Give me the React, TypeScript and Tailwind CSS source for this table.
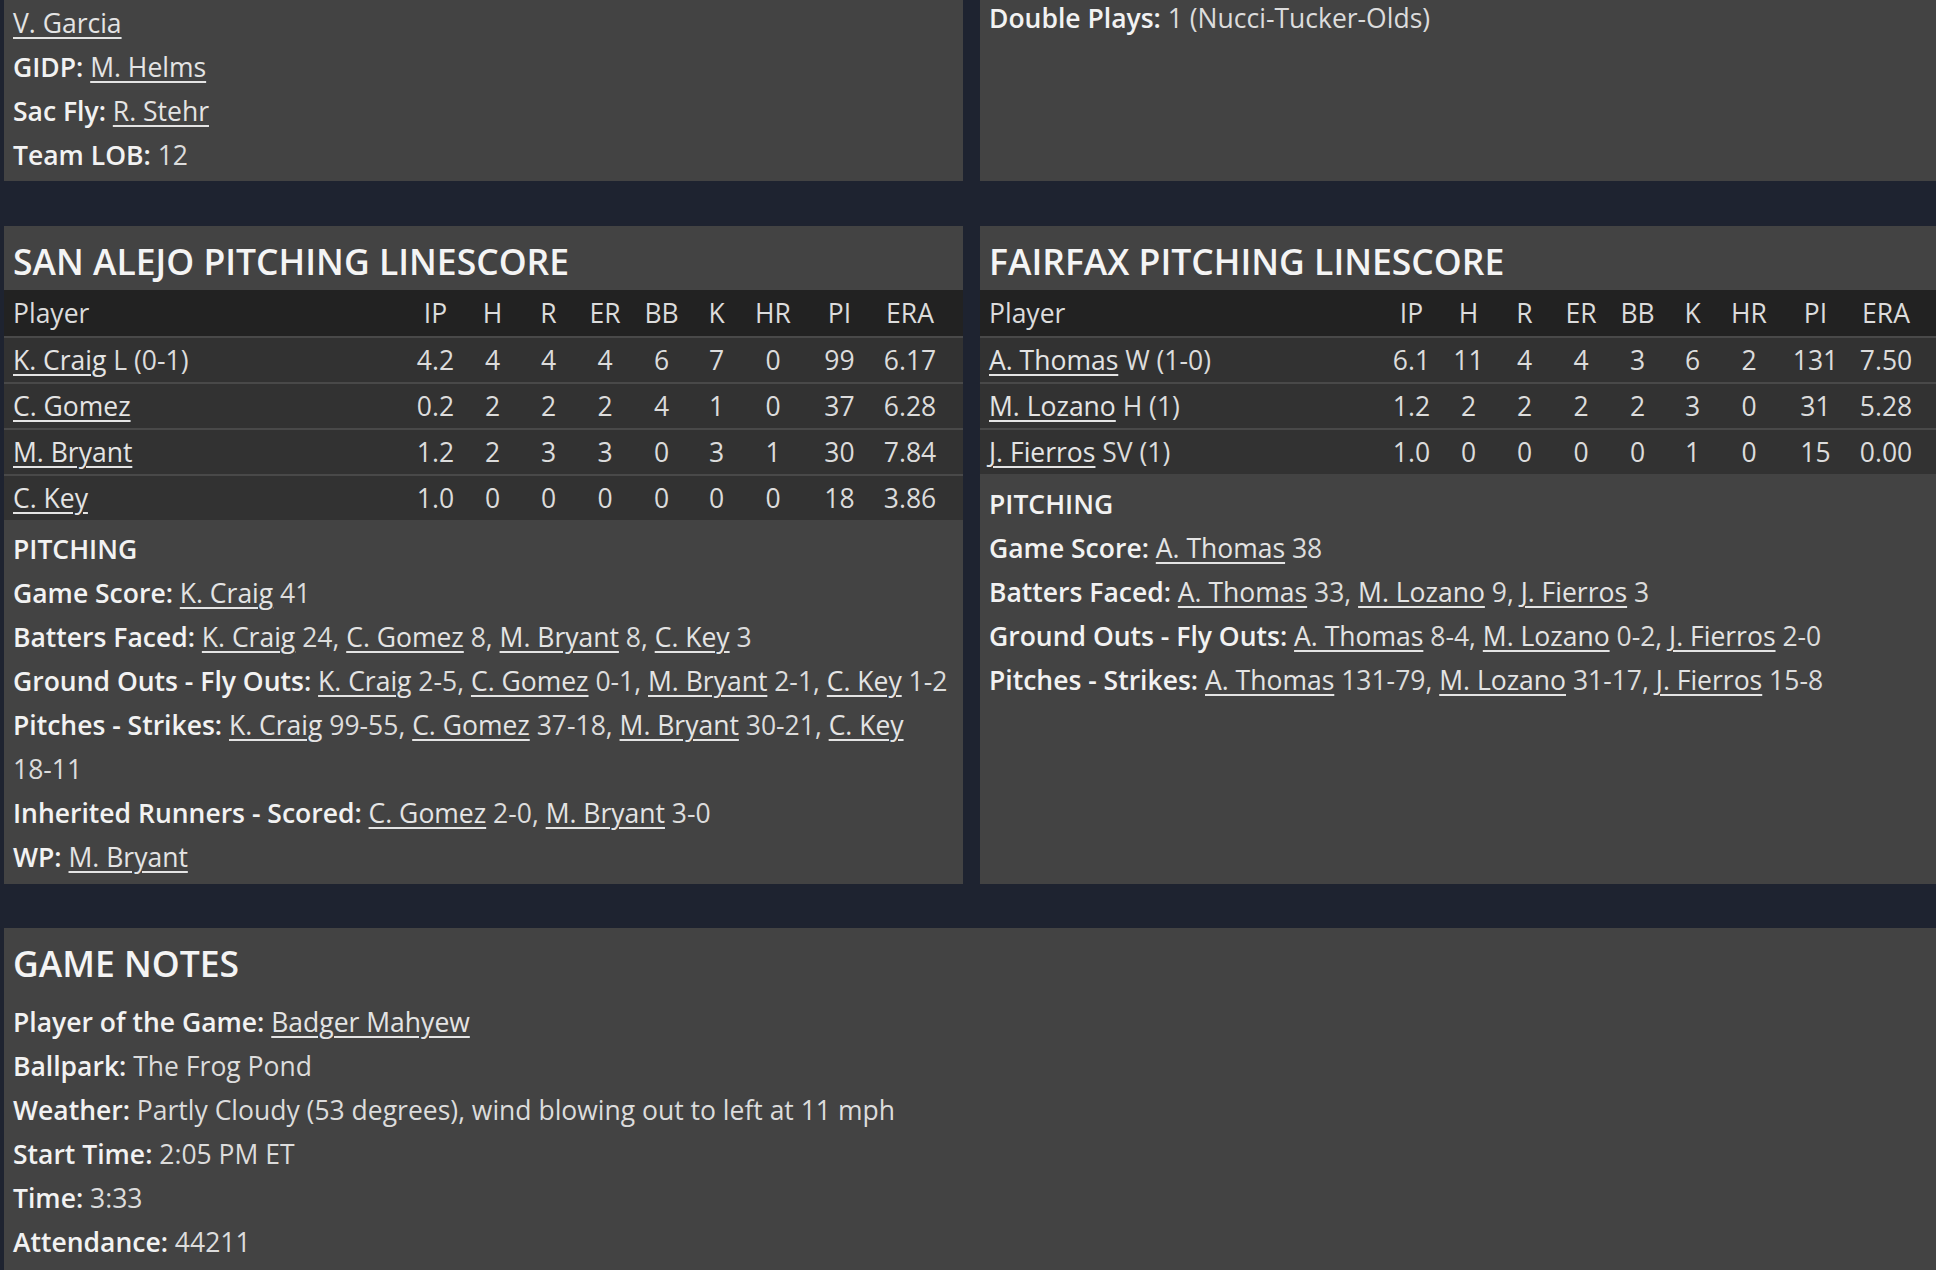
import React from "react";

function N({ children }: { children: React.ReactNode }) {
  return (
    <span className="underline decoration-[1.5px] underline-offset-[4px] text-[#e4e4e4]">
      {children}
    </span>
  );
}

function L({ children }: { children: React.ReactNode }) {
  return <span className="font-semibold text-[#f2f2f2]">{children}</span>;
}

type Row = { name: string; dec: string; v: string[] };

const sanAlejo: Row[] = [
  { name: "K. Craig", dec: " L (0-1)", v: ["4.2", "4", "4", "4", "6", "7", "0", "99", "6.17"] },
  { name: "C. Gomez", dec: "", v: ["0.2", "2", "2", "2", "4", "1", "0", "37", "6.28"] },
  { name: "M. Bryant", dec: "", v: ["1.2", "2", "3", "3", "0", "3", "1", "30", "7.84"] },
  { name: "C. Key", dec: "", v: ["1.0", "0", "0", "0", "0", "0", "0", "18", "3.86"] },
];

const fairfax: Row[] = [
  { name: "A. Thomas", dec: " W (1-0)", v: ["6.1", "11", "4", "4", "3", "6", "2", "131", "7.50"] },
  { name: "M. Lozano", dec: " H (1)", v: ["1.2", "2", "2", "2", "2", "3", "0", "31", "5.28"] },
  { name: "J. Fierros", dec: " SV (1)", v: ["1.0", "0", "0", "0", "0", "1", "0", "15", "0.00"] },
];

const cols = ["IP", "H", "R", "ER", "BB", "K", "HR", "PI", "ERA"];
const gridCls =
  "grid grid-cols-[403px_57px_57px_55px_58px_55px_55px_58px_75px_66px] pr-[20px] items-center";

function Table({ rows }: { rows: Row[] }) {
  return (
    <div>
      <div className={`${gridCls} h-[46px] bg-[#222222] text-[#dcdcdc]`}>
        <div className="pl-[9px]">Player</div>
        {cols.map((c) => (
          <div key={c} className="text-center">
            {c}
          </div>
        ))}
      </div>
      {rows.map((r) => (
        <div
          key={r.name}
          className={`${gridCls} h-[46px] border-t-2 border-[#494949] bg-[#323232] text-[#dcdcdc]`}
        >
          <div className="pl-[9px] whitespace-nowrap">
            <N>{r.name}</N>
            {r.dec}
          </div>
          {r.v.map((x, i) => (
            <div key={i} className="text-center">
              {x}
            </div>
          ))}
        </div>
      ))}
    </div>
  );
}

function Heading({ children }: { children: React.ReactNode }) {
  return (
    <div className="h-[64px] pt-[6px] leading-[58px] pl-[9px] text-[35.5px] font-semibold text-[#f4f4f4] whitespace-nowrap">
      {children}
    </div>
  );
}

export default function App() {
  return (
    <div className="w-[1936px] h-[1270px] overflow-hidden bg-[#1e2330] font-['Open_Sans',sans-serif] text-[26.5px] leading-[44px] text-[#dcdcdc]">
      <div className="w-[1939px] pl-[4px]">
        {/* top row */}
        <div className="grid grid-cols-[959px_959px] gap-x-[17px] h-[181px]">
          <div className="bg-[#434343] pl-[9px] pt-[1px]">
            <div>
              <N>V. Garcia</N>
            </div>
            <div>
              <L>GIDP:</L> <N>M. Helms</N>
            </div>
            <div>
              <L>Sac Fly:</L> <N>R. Stehr</N>
            </div>
            <div>
              <L>Team LOB:</L> 12
            </div>
          </div>
          <div className="bg-[#434343] pl-[9px]">
            <div className="leading-[37px]">
              <L>Double Plays:</L> 1 (Nucci-Tucker-Olds)
            </div>
          </div>
        </div>

        {/* pitching row */}
        <div className="grid grid-cols-[959px_959px] gap-x-[17px] mt-[45px] h-[658px]">
          <div className="bg-[#434343]">
            <Heading>SAN ALEJO PITCHING LINESCORE</Heading>
            <Table rows={sanAlejo} />
            <div className="pl-[9px] pt-[7px]">
              <div>
                <L>PITCHING</L>
              </div>
              <div>
                <L>Game Score:</L> <N>K. Craig</N> 41
              </div>
              <div>
                <L>Batters Faced:</L> <N>K. Craig</N> 24, <N>C. Gomez</N> 8, <N>M. Bryant</N> 8,{" "}
                <N>C. Key</N> 3
              </div>
              <div className="whitespace-nowrap">
                <L>Ground Outs - Fly Outs:</L> <N>K. Craig</N> 2-5, <N>C. Gomez</N> 0-1,{" "}
                <N>M. Bryant</N> 2-1, <N>C. Key</N> 1-2
              </div>
              <div>
                <span className="whitespace-nowrap">
                  <L>Pitches - Strikes:</L> <N>K. Craig</N> 99-55, <N>C. Gomez</N> 37-18,{" "}
                  <N>M. Bryant</N> 30-21, <N>C. Key</N>
                </span>
                <br />
                18-11
              </div>
              <div>
                <L>Inherited Runners - Scored:</L> <N>C. Gomez</N> 2-0, <N>M. Bryant</N> 3-0
              </div>
              <div>
                <L>WP:</L> <N>M. Bryant</N>
              </div>
            </div>
          </div>
          <div className="bg-[#434343]">
            <Heading>FAIRFAX PITCHING LINESCORE</Heading>
            <Table rows={fairfax} />
            <div className="pl-[9px] pt-[8px]">
              <div>
                <L>PITCHING</L>
              </div>
              <div>
                <L>Game Score:</L> <N>A. Thomas</N> 38
              </div>
              <div>
                <L>Batters Faced:</L> <N>A. Thomas</N> 33, <N>M. Lozano</N> 9, <N>J. Fierros</N> 3
              </div>
              <div>
                <L>Ground Outs - Fly Outs:</L> <N>A. Thomas</N> 8-4, <N>M. Lozano</N> 0-2,{" "}
                <N>J. Fierros</N> 2-0
              </div>
              <div>
                <L>Pitches - Strikes:</L> <N>A. Thomas</N> 131-79, <N>M. Lozano</N> 31-17,{" "}
                <N>J. Fierros</N> 15-8
              </div>
            </div>
          </div>
        </div>

        {/* game notes */}
        <div className="mt-[44px] h-[400px] bg-[#434343]">
          <Heading>GAME NOTES</Heading>
          <div className="pl-[9px] pt-[8px]">
            <div>
              <L>Player of the Game:</L> <N>Badger Mahyew</N>
            </div>
            <div>
              <L>Ballpark:</L> The Frog Pond
            </div>
            <div>
              <L>Weather:</L> Partly Cloudy (53 degrees), wind blowing out to left at 11 mph
            </div>
            <div>
              <L>Start Time:</L> 2:05 PM ET
            </div>
            <div>
              <L>Time:</L> 3:33
            </div>
            <div>
              <L>Attendance:</L> 44211
            </div>
          </div>
        </div>
      </div>
    </div>
  );
}
